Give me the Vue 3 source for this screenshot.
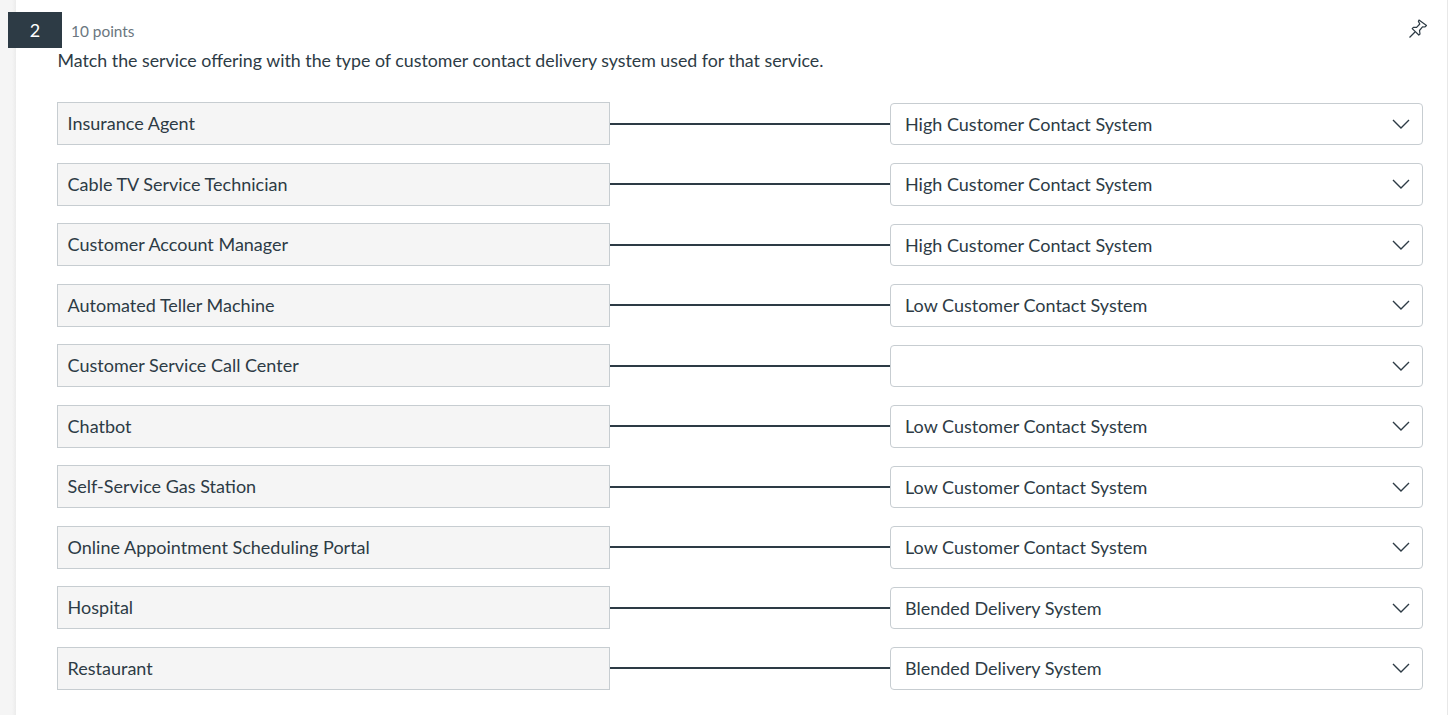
<script setup>
const rows = [
  ['Insurance Agent', 'High Customer Contact System'],
  ['Cable TV Service Technician', 'High Customer Contact System'],
  ['Customer Account Manager', 'High Customer Contact System'],
  ['Automated Teller Machine', 'Low Customer Contact System'],
  ['Customer Service Call Center', ''],
  ['Chatbot', 'Low Customer Contact System'],
  ['Self-Service Gas Station', 'Low Customer Contact System'],
  ['Online Appointment Scheduling Portal', 'Low Customer Contact System'],
  ['Hospital', 'Blended Delivery System'],
  ['Restaurant', 'Blended Delivery System'],
]
</script>

<template>
  <div class="page">
    <div class="strip"></div>
    <main class="card">
      <div class="badge">2</div>
      <header class="head">
        <span class="points">10 points</span>
        <svg class="pin" width="20" height="20" viewBox="0 0 20 20" fill="none" stroke="#2d3b45" stroke-width="1.2">
          <path d="M1.5 18.5 L7 13" />
          <path d="M11 1 L18.5 6.5 L16.8 8 L14.5 7.8 L11.5 11.5 L12 15 L10.8 16 L4.2 9.6 L5.4 8.4 L8.6 8.4 L11.8 5 L10.4 2.4 Z" stroke-linejoin="round" />
        </svg>
      </header>
      <p class="prompt">Match the service offering with the type of customer contact delivery system used for that service.</p>
      <div class="rows">
        <div v-for="r in rows" :key="r[0]" class="row">
          <div class="label">{{ r[0] }}</div>
          <div class="line"></div>
          <div class="select">
            <span>{{ r[1] }}</span>
            <svg class="chev" width="18" height="10" viewBox="0 0 18 10" fill="none" stroke="#2d3b45" stroke-width="1.4">
              <path d="M1 1 L9 9 L17 1" />
            </svg>
          </div>
        </div>
      </div>
    </main>
  </div>
</template>

<style>
html, body { margin: 0; background: #fff; }
</style>

<style scoped>
.page {
  display: flex;
  height: 715px;
  overflow: hidden;
  font-family: Lato, "Open Sans", sans-serif;
  color: #2d3b45;
  background: #fff;
  box-sizing: border-box;
  border-right: 1px solid #e8e8e8;
}
.strip {
  width: 16px;
  flex: none;
  background: linear-gradient(to right, #f5f5f5 0, #f5f5f5 12px, #ececec 16px);
}
.card {
  position: relative;
  flex: 1;
  padding: 0 24px 0 41px;
  min-width: 0;
}
.badge {
  position: absolute;
  left: -8px;
  top: 12px;
  width: 54px;
  height: 36px;
  background: #2d3b45;
  color: #fff;
  font-size: 18px;
  line-height: 36px;
  text-align: center;
}
.head {
  display: flex;
  justify-content: space-between;
  align-items: flex-start;
  height: 49px;
  padding-top: 20px;
  box-sizing: border-box;
}
.points {
  margin-left: 14px;
  font-size: 15.4px;
  line-height: 22px;
  color: #6b7780;
}
.pin {
  margin-top: -1px;
  margin-right: -5px;
}
.prompt {
  margin: 0;
  padding-left: 0.5px;
  font-size: 17.8px;
  line-height: 22px;
}
.rows {
  display: flex;
  flex-direction: column;
  gap: 17.5px;
  margin-top: 31.4px;
}
.row {
  display: flex;
  align-items: center;
  height: 43px;
}
.label {
  width: 553px;
  height: 43px;
  box-sizing: border-box;
  flex: none;
  padding-left: 9.6px;
  background: #f5f5f5;
  border: 1px solid #c7cdd1;
  font-size: 18px;
  line-height: 40px;
}
.line {
  width: 280px;
  flex: none;
  height: 2px;
  background: #2d3b45;
}
.select {
  flex: 1;
  display: flex;
  justify-content: space-between;
  align-items: center;
  align-self: flex-end;
  height: 42.7px;
  box-sizing: border-box;
  padding: 0 12px 0.6px 14px;
  background: #fff;
  border: 1px solid #c7cdd1;
  border-radius: 4px;
  font-size: 18px;
}
</style>
